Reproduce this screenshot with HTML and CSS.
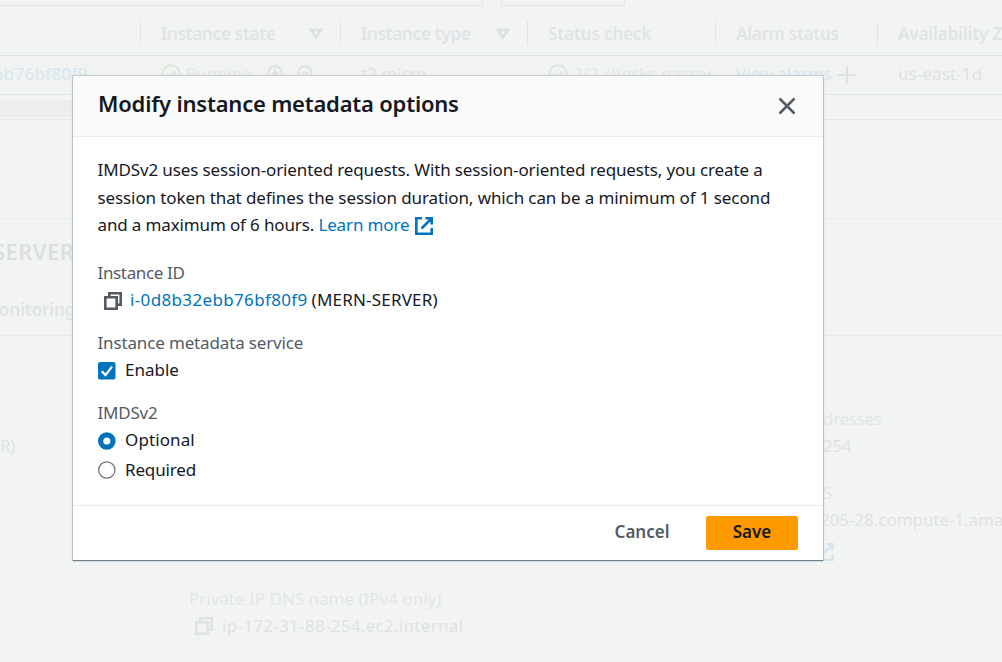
FILE: index.html
```html
<!DOCTYPE html>
<html lang="en">
<head>
<meta charset="utf-8">
<title>Modify instance metadata options</title>
<link rel="stylesheet" href="styles.css">
</head>
<body>
<div class="console" aria-hidden="true">
  <div class="toolbar"><div class="search"></div><div class="filter"></div></div>
  <div class="row head">
    <div class="cell"><span class="clip-d">D</span></div>
    <div class="cell"><span>Instance state</span><svg class="sort" width="14" height="12" viewBox="0 0 14 12"><path d="M2 2h10L7 9.5z"/></svg></div>
    <div class="cell"><span>Instance type</span><svg class="sort" width="14" height="12" viewBox="0 0 14 12"><path d="M2 2h10L7 9.5z"/></svg></div>
    <div class="cell status">Status check</div>
    <div class="cell">Alarm status</div>
    <div class="cell az">Availability Z</div>
  </div>
  <div class="row data">
    <div class="cell id">bb76bf80f9</div>
    <div class="cell ok state"><svg width="20" height="20" viewBox="0 0 20 20"><circle cx="10" cy="10" r="8.7"/><path d="M5.5 10.5l3 3 6-6"/></svg><span>Running</span>
      <svg class="mag m1" width="20" height="20" viewBox="0 0 20 20"><circle cx="9" cy="9" r="6.7"/><path d="M5.5 9h7M9 5.5v7M14 14l4 4"/></svg>
      <svg class="mag" width="20" height="20" viewBox="0 0 20 20"><circle cx="9" cy="9" r="6.7"/><path d="M5.5 9h7M14 14l4 4"/></svg></div>
    <div class="cell type">t2.micro</div>
    <div class="cell ok checks"><svg width="20" height="20" viewBox="0 0 20 20"><circle cx="10" cy="10" r="8.7"/><path d="M5.5 10.5l3 3 6-6"/></svg><span>2/2 checks passec</span></div>
    <div class="cell link alarms"><span>View alarms</span><svg width="18" height="18" viewBox="0 0 18 18"><path d="M9 0v18M0 9h18"/></svg></div>
    <div class="cell zone">us-east-1d</div>
  </div>
  <div class="scroll"><div class="thumb"></div></div>
  <div class="gap"></div>
  <div class="title">SERVER</div>
  <div class="tabs">onitoring</div>
  <div class="details">
    <div class="col c1"><span>R)</span></div>
    <div class="col c2">
      <div class="label private">Private IP DNS name (IPv4 only)</div>
      <div class="val internal"><svg class="copy" width="18" height="18" viewBox="0 0 18 18"><path d="M1.300 5.300h11.400v11.400H1.300zM5.300 5V1.300h11.400v11.400H13"/></svg><span>ip-172-31-88-254.ec2.internal</span></div>
    </div>
    <div class="col c3">
      <div class="label addr">dresses</div>
      <div class="val ip">254</div>
      <div class="label dns">S</div>
      <div class="val host">205-28.compute-1.ama</div>
      <svg class="ext" width="18" height="18" viewBox="0 0 18 18"><path d="M7 1.300H1.300v15.400h15.400V11M10.500 1.300h6.200v6.200M16.700 1.300L6.500 11.500"/></svg>
    </div>
  </div>
</div>

<div class="modal" role="dialog" aria-labelledby="dialog-title">
  <header class="modal-head">
    <h2 id="dialog-title">Modify instance metadata options</h2>
    <svg class="close" width="18" height="18" viewBox="0 0 18 18"><path d="M1.500 1.500l15 15M16.500 1.500l-15 15"/></svg>
  </header>
  <main class="modal-body">
    <p><span class="l1">IMDSv2 uses session-oriented requests. With session-oriented requests, you create a</span><br><span class="l2">session token that defines the session duration, which can be a minimum of 1 second</span><br><span class="l3">and a maximum of 6 hours. <a>Learn more</a></span><svg class="ext" width="18" height="18" viewBox="0 0 18 18"><path d="M7 1.300H1.300v15.400h15.400V11M10.500 1.300h6.200v6.200M16.700 1.300L6.500 11.500"/></svg></p>
    <section class="field">
      <div class="name iid">Instance ID</div>
      <div class="option instance"><svg class="copy" width="18" height="18" viewBox="0 0 18 18"><path d="M1.300 5.300h11.400v11.400H1.300zM5.300 5V1.300h11.400v11.400H13"/></svg><a>i-0d8b32ebb76bf80f9</a><span class="server">(MERN-SERVER)</span></div>
    </section>
    <section class="field">
      <div class="name ims">Instance metadata service</div>
      <div class="option"><svg width="18" height="18" viewBox="0 0 18 18"><rect width="17.500" height="17.500" rx="2" fill="#0073bb"/><path d="M3.800 9.200l3.700 3.900 6.500-8.500" fill="none" stroke="#fff" stroke-width="2.300"/></svg><span class="enable">Enable</span></div>
    </section>
    <section class="field">
      <div class="name imds">IMDSv2</div>
      <div class="option"><svg width="18" height="18" viewBox="0 0 18 18"><circle cx="8.800" cy="9" r="6.200" fill="#fff" stroke="#0073bb" stroke-width="5.200"/></svg><span class="optional">Optional</span></div>
      <div class="option second"><svg width="18" height="18" viewBox="0 0 18 18"><circle cx="8.800" cy="9" r="8.200" fill="#fff" stroke="#687078" stroke-width="1.200"/></svg><span class="required">Required</span></div>
    </section>
  </main>
  <footer class="modal-foot">
    <button class="cancel">Cancel</button>
    <button class="save">Save</button>
  </footer>
</div>
</body>
</html>
```
FILE: styles.css
```css
* { box-sizing: border-box; }
body {
  margin: 0; width: 1002px; height: 662px; overflow: hidden; position: relative;
  background: #f2f4f4; color: #16191f;
  font-family: "Noto Sans", "Open Sans", sans-serif; font-size: 17px; line-height: 27.5px;
  white-space: nowrap;
}
svg { display: block; flex: none; fill: none; }

.console { height: 662px; overflow: hidden; color: #dfe2e3; letter-spacing: -0.3px; }
.toolbar { height: 14px; display: flex; border-bottom: 1px solid #eff1f1; }
.search { width: 483px; height: 6px; border: 1px solid #e2e5e5; border-top: 0; border-left: 0; border-radius: 0 0 2px 0; }
.filter { width: 124px; height: 6px; margin-left: 18px; border: 1px solid #e2e5e5; border-top: 0; border-radius: 0 0 2px 2px; }
.row { display: grid; grid-template-columns: 140px 200px 187px 188px 162px 125px; }
.cell { display: flex; align-items: center; padding-left: 21px; overflow: hidden; }
.head { height: 42px; border-bottom: 1px solid #d8e4ea; font-weight: 600; align-items: center; padding-bottom: 2px; color: #e1e4e5; letter-spacing: -0.25px; }
.head .cell { height: 25px; border-left: 1px solid #e2e5e5; padding-left: 20px; }
.head .cell:first-child { border-left: 0; padding: 0; }
.head .status { letter-spacing: -0.1px; }
.head .az { letter-spacing: -0.1px; }
.clip-d { margin-left: -12px; }
.sort { stroke: #dde0e1; stroke-width: 2.5; margin: 0 17px 0 auto; }
.data { height: 39px; border-bottom: 1px solid #d8e4ea; background: #f1f3f3; padding-bottom: 2px; }
.id, .link { color: #d7e5ef; }
.data .id { padding: 0; margin-left: -7px; letter-spacing: 0.3px; }
.ok { color: #dfe9dc; }
.ok svg { stroke: #dbe7d7; stroke-width: 2; margin-right: 5px; }
.ok .mag { stroke: #dfe2e3; margin-right: 10px; }
.ok .m1 { margin-left: 14px; }
.state { letter-spacing: -0.2px; }
.type { letter-spacing: -0.05px; }
.checks { letter-spacing: -0.05px; }
.alarms { letter-spacing: -0.05px; }
.zone { letter-spacing: 0.1px; }
.alarms svg { stroke: #dfe2e3; stroke-width: 2.2; margin: 2px 0 0 6px; }
.scroll { height: 25px; padding-top: 5px; border-bottom: 1px solid #e6e9e9; }
.thumb { width: 700px; height: 17px; background: #eceeee; }
.gap { height: 99px; border-bottom: 1px solid #e9ecec; }
.title { height: 66px; line-height: 65px; font-size: 22px; font-weight: 600; margin-left: -7px; color: #dcdfe1; letter-spacing: 0.4px; }
.tabs { height: 51px; line-height: 50px; font-weight: 600; border-bottom: 1px solid #e8ebeb; color: #e1e4e5; margin-left: -1px; letter-spacing: -0.1px; }
.details { height: 327px; display: grid; grid-template-columns: 178px 517px 307px; }
.col { padding-top: 69px; }
.c1 { padding-top: 96px; }
.c2 { padding: 249px 0 0 10px; border-left: 1px solid #eff1f1; }
.c3 { border-left: 1px solid #eff1f1; padding-left: 127px; }
.label { color: #e3e6e7; }
.private { letter-spacing: 0; }
.internal { letter-spacing: 0.3px; margin-top: -1px; }
.internal .copy { position: relative; top: 1px; }
.copy { stroke-width: 2.6; stroke: #545b64; }
.val { display: flex; align-items: center; }
.console .copy { stroke: #dfe2e3; margin: 0 9px 0 6px; }
.ip { margin-top: -1px; }
.dns { margin-top: 20px; }
.host { margin: -1px 0 0 -3px; letter-spacing: -0.05px; }
.ext { stroke: #0073bb; stroke-width: 2.6; }
.console .ext { stroke: #d7e5ef; margin: 10px 0 0 -7px; }

.modal {
  position: absolute; left: 73px; top: 76px; width: 750px; height: 484px;
  display: flex; flex-direction: column; background: #fff;
  box-shadow: 0 1px 1px #74838b, 0 0 1px 1px #c8cdd0;
}
.modal-head { height: 61px; display: flex; justify-content: space-between; padding: 14px 27px 0 25px; background: #fafafa; border-bottom: 1px solid #eaeded; }
h2 { margin: 0; font-size: 22px; line-height: 27px; font-weight: 600; letter-spacing: -0.21px; }
.close { stroke: #545b64; stroke-width: 2.5; margin-top: 7px; }
.modal-body { flex: 1; padding: 19px 25px 0 24.5px; letter-spacing: -0.4px; }
.l1 { letter-spacing: -0.13px; }
.l2 { letter-spacing: -0.1px; }
.l3 { letter-spacing: -0.14px; }
p { margin: 0 0 20px; }
p .ext { display: inline-block; vertical-align: -4px; margin-left: 5.5px; }
a { color: #0073bb; }
.field { margin-bottom: 15px; }
.name { color: #545b64; }
.iid { letter-spacing: -0.35px; }
.ims { letter-spacing: -0.15px; }
.imds { letter-spacing: -0.2px; }
.option { display: flex; align-items: center; gap: 9.5px; }
.option svg { position: relative; top: 1px; }
.second { margin-top: 2px; }
.instance { padding-left: 6.5px; gap: 0; }
.instance a { margin: 0 4px 0 8px; letter-spacing: 0.35px; }
.server { letter-spacing: 0.2px; }
.enable { letter-spacing: 0; }
.optional { letter-spacing: 0.1px; }
.required { letter-spacing: -0.15px; }
.modal-foot { height: 55px; border-top: 1px solid #eaeded; padding: 10px 25px; display: flex; justify-content: flex-end; gap: 12px; }
button { font: 600 17px/30px "Noto Sans", "Open Sans", sans-serif; height: 34px; border: 0; border-radius: 2px; padding: 0 0 3px; }
.cancel { width: 104px; color: #545b64; background: transparent; }
.save { width: 92px; color: #16191f; background: #ff9900; }
```
